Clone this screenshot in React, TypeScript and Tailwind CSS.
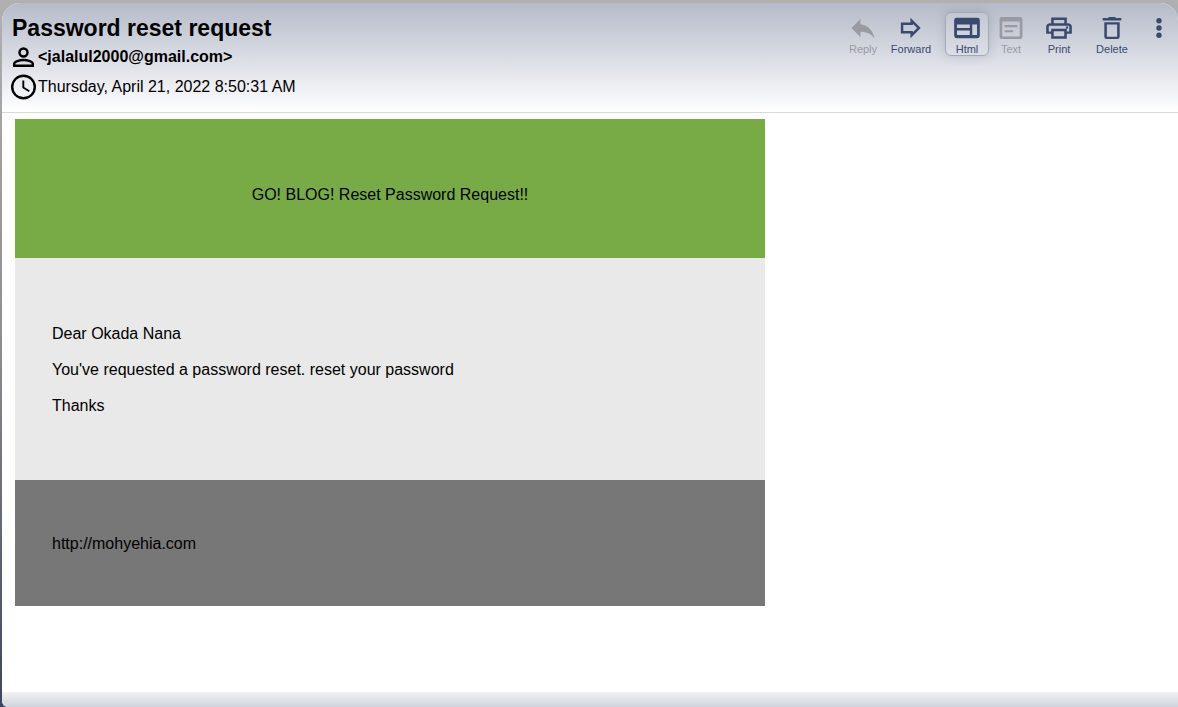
import React from "react";

type ToolProps = {
  label: string;
  path: React.ReactNode;
  disabled?: boolean;
  active?: boolean;
  className: string;
};

function Tool({ label, path, disabled, active, className }: ToolProps) {
  return (
    <button
      type="button"
      disabled={disabled}
      aria-pressed={active}
      className={`flex h-11 flex-col items-center rounded-md border pt-px ${
        active ? "border-[#a4a9b6] bg-white/10 shadow-[0_0_10px_rgba(90,95,110,0.25)]" : "border-transparent"
      } ${disabled ? "text-[#999ba1]" : "text-[#3a4a6e]"} ${className}`}
    >
      <svg viewBox="0 0 24 24" className="h-7 w-7" fill="currentColor" fillRule="evenodd" aria-hidden="true">
        {path}
      </svg>
      <span className="pt-px text-[11px] leading-3">{label}</span>
    </button>
  );
}

export default function App() {
  return (
    <div className="flex min-h-screen flex-col bg-linear-to-b from-[#b0b0b0] via-[#8c8c8e] to-[#3e455c] pt-[3px] pl-0.5 font-['Liberation_Sans',Arial,sans-serif] text-base text-black">
      <main className="flex grow flex-col overflow-hidden rounded-t-[18px] rounded-bl-md bg-white">
        <header className="flex h-[110px] items-start justify-between border-b border-[#d9d9d9] bg-linear-to-b from-[#b5bbc9] to-white pt-[9px] pr-[5px] pl-[9px]">
          <div>
            <h1 className="pt-1 pl-px text-[23px] leading-6 font-bold">Password reset request</h1>
            <div className="mt-[3px] flex h-7 items-center font-bold">
              <svg viewBox="0 0 26 28" className="mr-px h-7 w-[26px]" fill="none" stroke="currentColor" strokeWidth="2.4" aria-hidden="true">
                <circle cx="12.500" cy="9.500" r="4" />
                <path d="M3.200 22.800v-2c0-2.200 5.200-3.800 9.300-3.800s9.300 1.600 9.300 3.800v2z" />
              </svg>
              <span>&lt;jalalul2000@gmail.com&gt;</span>
            </div>
            <div className="mt-0.5 flex h-7 items-center">
              <svg viewBox="0 0 26 26" className="mr-px h-[26px] w-[26px]" fill="none" stroke="currentColor" strokeWidth="2.4" aria-hidden="true">
                <circle cx="12.500" cy="13" r="11.300" />
                <path d="M12.300 6.500v7l6 3.700" strokeWidth="1.900" />
              </svg>
              <time dateTime="2022-04-21T08:50:31">Thursday, April 21, 2022 8:50:31 AM</time>
            </div>
          </div>
          <nav className="flex" aria-label="Message actions">
            <Tool className="w-12" label="Reply" disabled path={<path transform="translate(-1.200 -1.200) scale(1.100)" d="M10 9V5l-7 7 7 7v-4.100c5 0 8.500 1.600 11 5.100-1-5-4-10-11-11z" />} />
            <Tool className="w-12" label="Forward" path={<path d="M3.300 16.700V7.300h8.200V3.200L20.300 12l-8.800 8.800v-4.100zM5.400 14.600h8.200v1.100L17.300 12l-3.700-3.700v1.100H5.400z" />} />
            <Tool className="ml-2.5 w-11" label="Html" active path={<path d="M3 3.300h18a2 2 0 0 1 2 2v13.400a2 2 0 0 1-2 2H3a2 2 0 0 1-2-2V5.300a2 2 0 0 1 2-2zM3.400 9v3h11V9zM3.400 14.100v4h11v-4zM16.500 9v9.100h4.100V9z" />} />
            <Tool className="w-11" label="Text" disabled path={<path d="M4.200 2.600h15.600a2 2 0 0 1 2 2v14.800a2 2 0 0 1-2 2H4.200a2 2 0 0 1-2-2V4.600a2 2 0 0 1 2-2zM4.500 6.500v12.700h15V6.500zM6.500 9.500h11v1.800h-11zM6.500 13.900h7.300v1.800H6.500z" />} />
            <Tool className="w-[52px]" label="Print" path={<path d="M18.700 8V3H5.300v5H4.300C2.500 8 1 9.300 1 11v6h4.300v4.200h13.400V17H23v-6c0-1.700-1.500-3-3.300-3zM7.500 5.100h9V8h-9zM16.500 19.100h-9v-4.400h9zM18.700 15v-2.400H5.300V15H3.200v-4c0-.500.500-.900 1.100-.900h15.400c.600 0 1.100.4 1.100.9v4zM19.900 11.600a1 1 0 1 1-2 0a1 1 0 0 1 2 0z" />} />
            <Tool className="ml-px w-[52px]" label="Delete" path={<path d="M9.500 2.500h5l1 1H20v2.100H4V3.500h4.500zM5.400 7h13.200v12.500a2 2 0 0 1-2 2H7.400a2 2 0 0 1-2-2zM7.600 9.100v10.300h8.800V9.100z" />} />
            <button type="button" aria-label="More actions" className="ml-[7px] flex h-8 w-7 items-center justify-center text-[#3a4a6e]">
              <svg viewBox="0 0 6 20" className="h-5 w-1.5" fill="currentColor" aria-hidden="true">
                <circle cx="3" cy="2.800" r="2.700" /><circle cx="3" cy="10" r="2.700" /><circle cx="3" cy="17.200" r="2.700" />
              </svg>
            </button>
          </nav>
        </header>
        <article className="grow px-[13px] pt-1.5 pb-8 leading-[18px]">
          <div className="max-w-[750px]">
            <h2 className="bg-[#78ab46] px-[37px] pt-[67px] pb-[54px] text-center">GO! BLOG! Reset Password Request!!</h2>
            <div className="flex flex-col gap-[18px] bg-[#e9e9e9] px-[37px] pt-[67px] pb-[65px]">
              <p>Dear Okada Nana</p>
              <p>You've requested a password reset. <a href="#reset">reset your password</a></p>
              <p>Thanks</p>
            </div>
            <div className="bg-[#777777] px-[37px] pt-[55px] pb-[53px]"><a href="http://mohyehia.com">http://mohyehia.com</a></div>
          </div>
        </article>
        <footer className="h-[15px] bg-linear-to-b from-[#f1f2f4] to-[#d0d3dc]" />
      </main>
    </div>
  );
}
